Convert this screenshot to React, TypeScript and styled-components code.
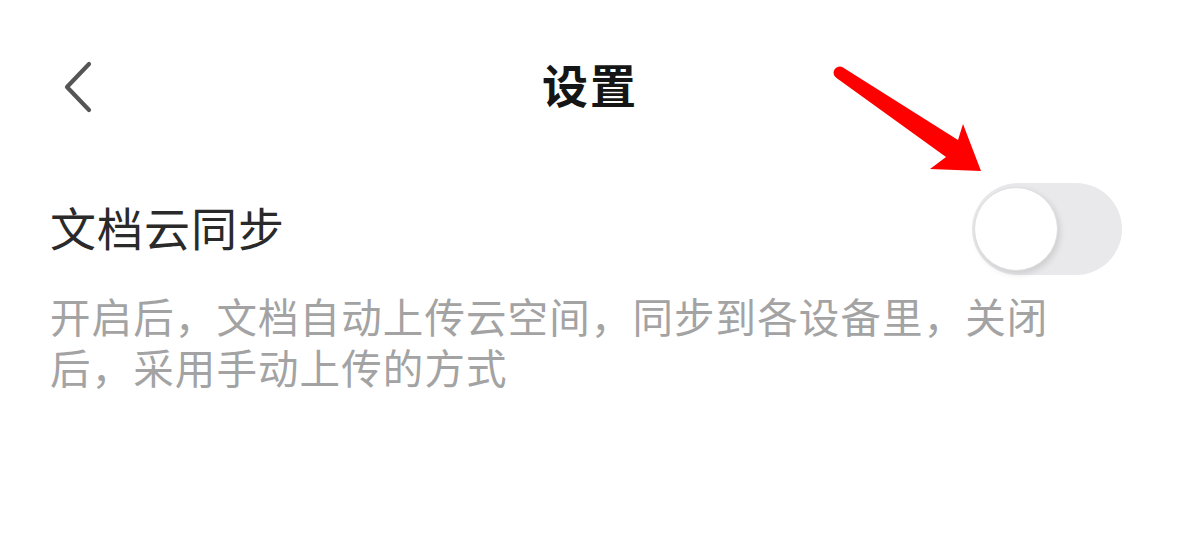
import React from "react";
import styled, { createGlobalStyle } from "styled-components";

const Global = createGlobalStyle`
  html, body { margin: 0; padding: 0; background: #ffffff; }
  body {
    font-family: "Noto Sans CJK SC", "Noto Sans", sans-serif;
    width: 1179px;
    height: 549px;
    overflow: hidden;
  }
`;

const Page = styled.div`
  position: relative;
  width: 1179px;
  height: 549px;
  box-sizing: border-box;
  padding: 0 57px 0 50px;
  background: #fff;
`;

const Header = styled.header`
  display: grid;
  grid-template-columns: 1fr auto 1fr;
  align-items: center;
  height: 174px;
`;

const BackButton = styled.button`
  justify-self: start;
  display: flex;
  align-items: center;
  background: none;
  border: none;
  padding: 0 0 0 10px;
  margin: 0;
  cursor: pointer;
`;

const Title = styled.h1`
  margin: 0;
  padding: 0 0 8px 8px;
  font-size: 46px;
  font-weight: 700;
  color: #151515;
  line-height: 1;
  letter-spacing: 2px;
`;

const Row = styled.div`
  display: flex;
  align-items: center;
  justify-content: space-between;
  margin-top: 9px;
`;

const Label = styled.div`
  padding-bottom: 7px;
  font-size: 46px;
  color: #2a2a2a;
  line-height: 1;
  letter-spacing: 1px;
`;

const Track = styled.div<{ $on?: boolean }>`
  display: flex;
  align-items: center;
  justify-content: ${(p) => (p.$on ? "flex-end" : "flex-start")};
  width: 150px;
  height: 92px;
  box-sizing: border-box;
  padding: 0 2px;
  border-radius: 46px;
  background: ${(p) => (p.$on ? "#34c759" : "#e9e9eb")};
`;

const Knob = styled.div`
  width: 84px;
  height: 84px;
  border-radius: 50%;
  background: #ffffff;
  box-sizing: border-box;
  border: 1.5px solid #dedede;
  box-shadow: 2px 3px 6px rgba(0, 0, 0, 0.12);
`;

const Description = styled.p`
  margin: 15px 0 0 0;
  max-width: 1010px;
  font-size: 40.5px;
  line-height: 51px;
  letter-spacing: 1.1px;
  color: #a3a3a3;
`;

const ArrowLayer = styled.svg`
  position: absolute;
  left: 825px;
  top: 60px;
  width: 165px;
  height: 120px;
  pointer-events: none;
`;

export default function App() {
  const on = false;
  return (
    <>
      <Global />
      <Page>
        <Header>
          <BackButton aria-label="返回">
            <svg width="36" height="56" viewBox="0 0 36 56">
              <polyline
                points="29,5 7,28 29,51"
                fill="none"
                stroke="#555"
                strokeWidth="4.2"
                strokeLinecap="round"
                strokeLinejoin="round"
              />
            </svg>
          </BackButton>
          <Title>设置</Title>
          <div />
        </Header>
        <Row>
          <Label>文档云同步</Label>
          <Track $on={on} role="switch" aria-checked={on}>
            <Knob />
          </Track>
        </Row>
        <Description>
          开启后，文档自动上传云空间，同步到各设备里，关闭后，采用手动上传的方式
        </Description>
        <ArrowLayer viewBox="825 60 165 120">
          <path
            d="M 843 67.5 L 958 140 L 963 124 L 981 171 L 930 169 L 946 157 L 836.5 78 A 5.8 5.8 0 0 1 843 67.5 Z"
            fill="#ff0000"
          />
        </ArrowLayer>
      </Page>
    </>
  );
}
